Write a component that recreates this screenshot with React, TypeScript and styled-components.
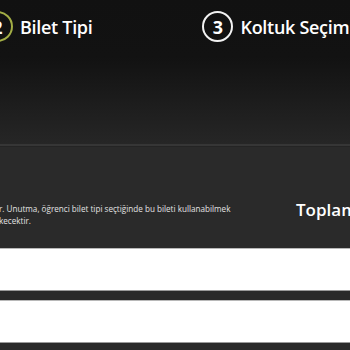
import React from "react";
import styled, { createGlobalStyle } from "styled-components";

const Global = createGlobalStyle`
  html, body { margin: 0; padding: 0; background: #2a2a2a; overflow: hidden; }
  body { font-family: "Open Sans", "Liberation Sans", sans-serif; }
  * { box-sizing: border-box; }
`;

const Page = styled.div`
  width: 350px;
  height: 350px;
  overflow: hidden;
  background: #2a2a2a;
  display: flex;
  flex-direction: column;
`;

const Hero = styled.header`
  height: 144px;
  flex: none;
  background: linear-gradient(180deg, #111111 0%, #121212 40%, #262626 100%);
  padding-top: 11px;
`;

const StepBar = styled.nav`
  display: flex;
  align-items: center;
  gap: 110px;
  margin-left: -18px;
  white-space: nowrap;
`;

const Step = styled.div`
  display: flex;
  align-items: center;
  gap: 7px;
  flex: none;
`;

const StepNum = styled.span<{ $active?: boolean }>`
  width: 31px;
  height: 31px;
  border-radius: 50%;
  border: 2px solid ${(p) => (p.$active ? "#a3ae45" : "#f2f2f2")};
  color: #ffffff;
  display: flex;
  align-items: center;
  justify-content: center;
  font-size: 18px;
  font-weight: 700;
  line-height: 1;
`;

const StepLabel = styled.span`
  color: #ffffff;
  font-size: 18px;
  font-weight: 600;
  letter-spacing: -0.3px;
`;

const Divider = styled.div`
  flex: none;
  height: 3px;
  border-top: 2px solid #363636;
  border-bottom: 1px solid #242424;
`;

const Info = styled.section`
  flex: none;
  height: 101px;
  display: grid;
  grid-template-columns: 296px 1fr;
  align-items: start;
  padding-top: 52px;
`;

const Note = styled.p`
  margin: 4px 0 0 -1px;
  color: #e2e2e2;
  font-size: 8.15px;
  line-height: 11.5px;
  white-space: pre;
`;

const Total = styled.h3`
  margin: 0;
  color: #ffffff;
  font-size: 17px;
  font-weight: 600;
  white-space: nowrap;
  line-height: 20px;
  padding-top: 1px;
`;

const Rows = styled.div`
  display: flex;
  flex-direction: column;
  gap: 9px;
`;

const Row = styled.div`
  height: 43px;
  background: #ffffff;
  border-top: 1px solid #b8b8b8;
  border-bottom: 1px solid #9a9a9a;
`;

export default function App() {
  return (
    <>
      <Global />
      <Page>
        <Hero>
          <StepBar>
            <Step>
              <StepNum $active>2</StepNum>
              <StepLabel>Bilet Tipi</StepLabel>
            </Step>
            <Step>
              <StepNum>3</StepNum>
              <StepLabel>Koltuk Seçimi</StepLabel>
            </Step>
          </StepBar>
        </Hero>
        <Divider />
        <Info>
          <Note>{"r. Unutma, öğrenci bilet tipi seçtiğinde bu bileti kullanabilmek\nkecektir."}</Note>
          <Total>Toplam Tutar</Total>
        </Info>
        <Rows>
          <Row />
          <Row />
        </Rows>
      </Page>
    </>
  );
}
